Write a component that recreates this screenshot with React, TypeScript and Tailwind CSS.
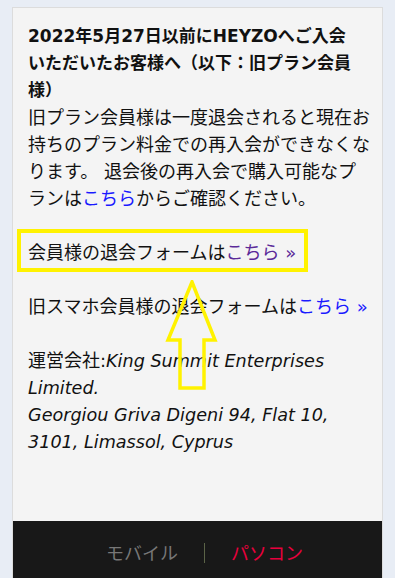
export default function App() {
  return (
    <div
      className="min-h-[578px] bg-[#e8edf5] px-[12px] pt-[7px]"
      style={{ fontFamily: '"DejaVu Sans", "Noto Sans CJK JP", sans-serif' }}
    >
      <div className="relative border border-[#dcdcdc] bg-[#f4f4f4]">
        <div className="pl-[15px] pr-[12px] pt-[15px] pb-[65px] text-[18px] leading-[27px] text-[#111]">
          <h2 className="text-[17px] font-bold leading-[27px]">
            2022年5月27日以前にHEYZOへご入会
            <br />
            いただいたお客様へ（以下：旧プラン会員様）
          </h2>
          <p>
            旧プラン会員様は一度退会されると現在お持ちのプラン料金での再入会ができなくなります。
            退会後の再入会で購入可能なプランは
            <a className="text-[#1a1aff]">こちら</a>
            からご確認ください。
          </p>
          <p className="mt-[27px]">
            会員様の退会フォームは<a className="text-[#5b2a99]">こちら »</a>
          </p>
          <p className="mt-[27px]">
            旧スマホ会員様の退会フォームは<a className="text-[#1a1aff]">こちら »</a>
          </p>
          <p className="mt-[27px] text-[17.6px]">
            <span className="text-[18px]">運営会社:</span>
            <i>King Summit Enterprises Limited.</i>
            <br />
            <i>Georgiou Griva Digeni 94, Flat 10, 3101, Limassol, Cyprus</i>
          </p>
        </div>

        <footer className="flex h-[57px] items-center justify-center gap-[26px] bg-[#181818] pl-[14px] pt-[7px] text-[18px]">
          <span className="text-[#777]">モバイル</span>
          <span className="h-[20px] w-px bg-[#5b6347]" />
          <span className="text-[#e8003d]">パソコン</span>
        </footer>

        {/* highlight overlay */}
        <div className="absolute left-[4px] top-[221px] h-[43px] w-[291px] border-[4px] border-[#fff200]" />
        <svg className="absolute left-[141px] top-[272px]" width="64" height="112" viewBox="0 0 64 112">
          <path
            d="M38 2 L61 60 L50 60 L50 108 L26 108 L26 60 L14 60 Z"
            fill="none"
            stroke="#fff200"
            strokeWidth="3.5"
            strokeLinejoin="miter"
          />
        </svg>
      </div>
    </div>
  )
}
